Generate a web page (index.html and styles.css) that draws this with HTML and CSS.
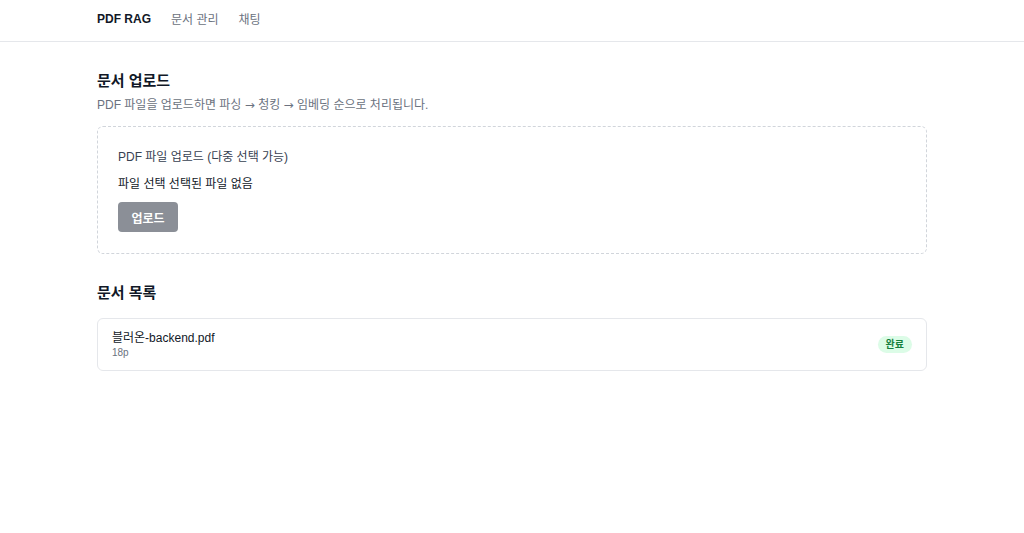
FILE: index.html
```html
<!DOCTYPE html>
<html lang="ko">
<head>
<meta charset="utf-8">
<title>PDF RAG</title>
<link rel="stylesheet" href="styles.css">
</head>
<body>
<header class="topbar">
  <nav class="nav">
    <span class="brand">PDF RAG</span>
    <a class="nav-link" href="#">문서 관리</a>
    <a class="nav-link" href="#">채팅</a>
  </nav>
</header>
<main class="main">
  <section class="section">
    <h2 class="title">문서 업로드</h2>
    <p class="subtitle">PDF 파일을 업로드하면 파싱 <span class="arrow">→</span> 청킹 <span class="arrow">→</span> 임베딩 순으로 처리됩니다.</p>
    <div class="upload-box">
      <div class="label">PDF 파일 업로드 (다중 선택 가능)</div>
      <div class="file-input"><span class="file-btn">파일 선택</span> <span class="file-name">선택된 파일 없음</span></div>
      <button class="upload-btn" disabled>업로드</button>
    </div>
  </section>
  <section class="section list-section">
    <h2 class="title">문서 목록</h2>
    <div class="doc">
      <div class="doc-info">
        <div class="doc-name">블러온-backend.pdf</div>
        <div class="doc-meta">18p</div>
      </div>
      <span class="badge">완료</span>
    </div>
  </section>
</main>
</body>
</html>
```
FILE: styles.css
```css
* { box-sizing: border-box; }
body {
  margin: 0;
  font-family: "Liberation Sans", Arial, "Noto Sans CJK KR", sans-serif;
  color: #111827;
  background: #fff;
}
.topbar {
  border-bottom: 1px solid #e5e7eb;
  height: 42px;
}
.nav {
  width: 830px;
  margin: 0 auto;
  display: flex;
  align-items: center;
  height: 41px;
  gap: 20px;
  padding-bottom: 4px;
}
.brand {
  font-weight: 700;
  font-size: 12px;
  color: #111827;
}
.nav-link {
  font-size: 12px;
  color: #6b7280;
  text-decoration: none;
}
.main {
  width: 830px;
  margin: 0 auto;
  padding-top: 28px;
}
.title {
  margin: 0;
  font-size: 15px;
  font-weight: 700;
  line-height: 22px;
}
.subtitle {
  margin: 4px 0 0;
  font-size: 12px;
  color: #6b7280;
  line-height: 18px;
}
.arrow {
  font-family: "DejaVu Sans", sans-serif;
  font-size: 12px;
}
.upload-box {
  margin-top: 12px;
  border: 1px dashed #d1d5db;
  border-radius: 6px;
  padding: 21px 20px 20px;
  height: 128px;
}
.label {
  font-size: 12px;
  color: #374151;
  line-height: 18px;
}
.file-input {
  margin-top: 9px;
  font-size: 12px;
  line-height: 18px;
  color: #111827;
}
.upload-btn {
  margin-top: 9px;
  display: block;
  width: 60px;
  height: 30px;
  border: none;
  border-radius: 4px;
  background: #8b8f97;
  color: #fff;
  font-family: inherit;
  font-size: 12px;
  font-weight: 700;
  padding: 0;
}
.list-section {
  margin-top: 28px;
}
.doc {
  margin-top: 14px;
  border: 1px solid #e5e7eb;
  border-radius: 6px;
  height: 53px;
  padding: 0 14px;
  display: flex;
  align-items: center;
  justify-content: space-between;
}
.doc-name {
  font-size: 12px;
  line-height: 16px;
  color: #111827;
}
.doc-meta {
  font-size: 10px;
  color: #6b7280;
  line-height: 14px;
}
.badge {
  background: #dcfce7;
  color: #15803d;
  font-size: 10px;
  font-weight: 700;
  border-radius: 9px;
  padding: 2px 8px;
  line-height: 13px;
}
```
